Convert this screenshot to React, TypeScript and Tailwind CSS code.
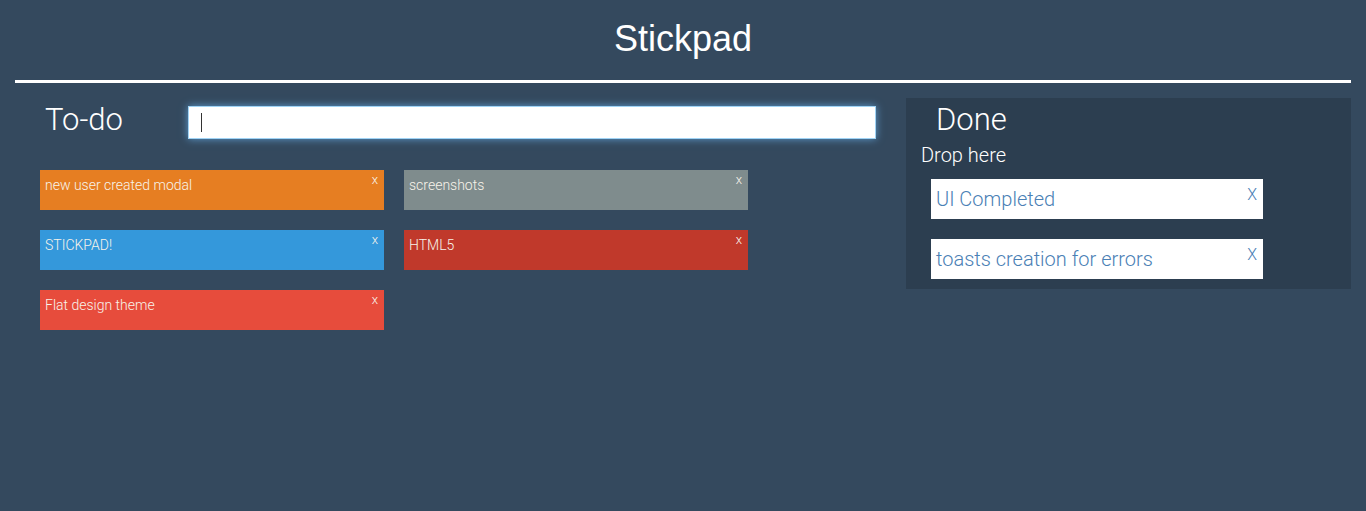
import React from "react";

const todo = [
  { t: "new user created modal", c: "bg-[#e67e22]" },
  { t: "screenshots", c: "bg-[#7f8c8d]" },
  { t: "STICKPAD!", c: "bg-[#3498db]" },
  { t: "HTML5", c: "bg-[#c0392b]" },
  { t: "Flat design theme", c: "bg-[#e74c3c]" },
];

const done = ["UI Completed", "toasts creation for errors"];

export default function App() {
  return (
    <div className="min-h-screen bg-[#34495e] px-[15px] font-['Roboto',sans-serif] text-white">
      <h1 className="pt-[19px] text-center font-['Liberation_Sans',Arial,sans-serif] text-[36px] leading-[40px] font-normal">
        Stickpad
      </h1>
      <div className="mt-[21px] h-[3px] bg-white" />
      <div className="flex">
        <div className="w-[891px] pt-[18px]">
          <div className="flex items-start">
            <h2 className="ml-[30px] mt-[1px] w-[143px] text-[31px] leading-[36px] font-light">To-do</h2>
            <div className="mt-[5px] flex h-[33px] w-[688px] items-center border border-[#9fd3f5] bg-white pl-[12px] shadow-[0_0_8px_rgba(102,175,233,0.8)]">
              <span className="h-[19px] w-[1px] bg-[#333]" />
            </div>
          </div>
          <div className="ml-[25px] mt-[31px] grid grid-cols-[344px_344px] gap-[20px]">
            {todo.map((n) => (
              <div key={n.t} className={`relative h-[40px] ${n.c} px-[5px] pt-[5px] text-[14px] leading-[20px] font-light text-[#f7f3ea]`}>
                {n.t}
                <span className="absolute right-[6px] top-[2px] text-[13px] leading-[16px] font-light">x</span>
              </div>
            ))}
          </div>
        </div>
        <div className="mt-[15px] w-[445px] self-start bg-[#2c3e50] pt-[4px] pb-[10px]">
          <h2 className="ml-[30px] text-[31px] leading-[36px] font-light">Done</h2>
          <div className="ml-[15px] mt-[5px] text-[20px] leading-[24px] font-light">Drop here</div>
          <div className="ml-[25px] mt-[12px] flex w-[332px] flex-col gap-[20px]">
            {done.map((d) => (
              <div key={d} className="relative h-[40px] bg-white pl-[5px] pt-[8px] text-[20px] leading-[24px] font-light text-[#4a80b5]">
                {d}
                <span className="absolute right-[6px] top-[6px] text-[16px] leading-[20px] font-light">X</span>
              </div>
            ))}
          </div>
        </div>
      </div>
    </div>
  );
}
